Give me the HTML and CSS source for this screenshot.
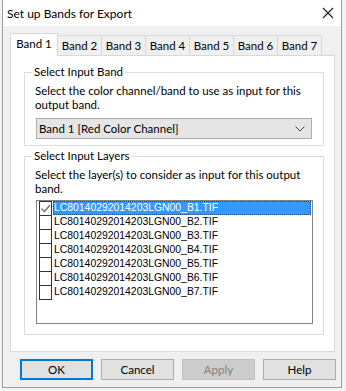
FILE: index.html
```html
<!DOCTYPE html>
<html>
  <head>
    <meta charset="UTF-8" />
    <title>Set up Bands for Export</title>
    <link rel="stylesheet" href="styles.css">
  </head>
  <body>
    <div class="window">
      <div class="titlebar">
        <span class="title">Set up Bands for Export</span>
        <svg class="close" width="12" height="12" viewBox="0 0 12 12">
          <path d="M1 1 L11 11 M11 1 L1 11" stroke="#1a1a1a" stroke-width="1.1" fill="none" />
        </svg>
      </div>

      <div class="client">
        <div class="tabs">
          <div class="tab active">Band 1</div>
          <div class="tab">Band 2</div>
          <div class="tab">Band 3</div>
          <div class="tab">Band 4</div>
          <div class="tab">Band 5</div>
          <div class="tab">Band 6</div>
          <div class="tab">Band 7</div>
        </div>

        <div class="panel">
          <div class="group group-band">
            <div class="group-title">Select Input Band</div>
            <p class="desc">Select the color channel/band to use as input for this output band.</p>
            <div class="dropdown">
              <span>Band 1 [Red Color Channel]</span>
              <svg width="10" height="6" viewBox="0 0 10 6">
                <path d="M0.5 0.5 L5 5 L9.5 0.5" stroke="#444" stroke-width="1" fill="none" />
              </svg>
            </div>
          </div>

          <div class="group group-layers">
            <div class="group-title">Select Input Layers</div>
            <p class="desc">Select the layer(s) to consider as input for this output band.</p>
            <div class="listbox">
              <div class="row selected">
                <span class="check checked">
                  <svg width="11" height="11" viewBox="0 0 11 11">
                    <path d="M1.5 5.5 L4.5 8.5 L10 2" stroke="#6a6a6a" stroke-width="1.2" fill="none" />
                  </svg>
                </span>
                <span class="name">LC80140292014203LGN00_B1.TIF</span>
              </div>
              <div class="row"><span class="check"></span><span class="name">LC80140292014203LGN00_B2.TIF</span></div>
              <div class="row"><span class="check"></span><span class="name">LC80140292014203LGN00_B3.TIF</span></div>
              <div class="row"><span class="check"></span><span class="name">LC80140292014203LGN00_B4.TIF</span></div>
              <div class="row"><span class="check"></span><span class="name">LC80140292014203LGN00_B5.TIF</span></div>
              <div class="row"><span class="check"></span><span class="name">LC80140292014203LGN00_B6.TIF</span></div>
              <div class="row"><span class="check"></span><span class="name">LC80140292014203LGN00_B7.TIF</span></div>
            </div>
          </div>
        </div>

        <div class="buttons">
          <div class="btn default">OK</div>
          <div class="btn">Cancel</div>
          <div class="btn disabled">Apply</div>
          <div class="btn">Help</div>
        </div>
      </div>
    </div>
  </body>
</html>
```

FILE: styles.css
```css
body {
  margin: 0;
  background: #f3f3f3;
  font-family: Lato, "Noto Sans", sans-serif;
  font-size: 11.5px;
  color: #000;
}

.window {
  box-sizing: border-box;
  width: 340px;
  height: 388px;
  margin-left: 2px;
  background: #f0f0f0;
  border: 1px solid #9c9c9c;
  border-top: 0;
}

.titlebar {
  height: 26px;
  background: #fff;
  display: flex;
  align-items: center;
  justify-content: space-between;
  padding: 0 7px 0 4px;
}

.title {
  font-size: 12px;
}

.client {
  padding: 7px 5px 0 7px;
}

.tabs {
  display: flex;
  align-items: flex-end;
  height: 22px;
}

.tab {
  box-sizing: border-box;
  height: 20px;
  width: 45px;
  border: 1px solid #d9d9d9;
  border-bottom: 0;
  margin-left: -1px;
  background: #f0f0f0;
  display: flex;
  align-items: center;
  justify-content: center;
  line-height: 1;
}

.tab.active {
  width: 48px;
  height: 23px;
  margin-left: 0;
  margin-bottom: -1px;
  background: #fff;
  position: relative;
  z-index: 1;
  padding-bottom: 2px;
}

.panel {
  box-sizing: border-box;
  height: 297px;
  width: 325px;
  background: #fff;
  border: 1px solid #d9d9d9;
  padding: 16px 0 0 13px;
}

.group {
  box-sizing: border-box;
  width: 300px;
  border: 1px solid #dcdcdc;
  padding: 0 0 0 10px;
}

.group-band {
  height: 74px;
}

.group-layers {
  height: 179px;
  margin-top: 10px;
}

.group-title {
  width: fit-content;
  margin: -8px 0 0 -3px;
  padding: 0 2px;
  background: #fff;
  line-height: 14px;
}

.desc {
  margin: 5px 0 0;
  line-height: 14px;
  width: 272px;
}

.dropdown {
  box-sizing: border-box;
  width: 276px;
  height: 21px;
  margin: 6px 0 0 1px;
  background: #e5e5e5;
  border: 1px solid #adadad;
  display: flex;
  align-items: center;
  justify-content: space-between;
  padding: 0 6px 0 2px;
}

.listbox {
  box-sizing: border-box;
  width: 277px;
  height: 124px;
  margin: 4px 0 0 1px;
  border: 1px solid #828282;
  padding: 0 0 0 2px;
  font-family: "Liberation Sans", Arial, sans-serif;
  font-size: 10.4px;
}

.row {
  display: flex;
  align-items: flex-start;
  height: 14px;
}

.check {
  box-sizing: border-box;
  flex: none;
  width: 13px;
  height: 15px;
  border: 1px solid #333;
  background: #fff;
  display: flex;
  align-items: center;
  justify-content: center;
}

.name {
  margin-left: 1px;
  line-height: 14px;
  padding-left: 1px;
}

.row.selected .name {
  box-sizing: border-box;
  width: 258px;
  height: 14px;
  background: #3399ff;
  color: #fff;
  outline: 1px dotted #1a4f86;
  outline-offset: -1px;
}

.buttons {
  display: flex;
  gap: 8px;
  margin: 7px 0 0 10px;
}

.btn {
  box-sizing: border-box;
  width: 73px;
  height: 21px;
  background: #e1e1e1;
  border: 1px solid #adadad;
  display: flex;
  align-items: center;
  justify-content: center;
}

.btn.default {
  border: 2px solid #0078d7;
}

.btn.disabled {
  background: #cccccc;
  border-color: #bfbfbf;
  color: #838383;
}
```
